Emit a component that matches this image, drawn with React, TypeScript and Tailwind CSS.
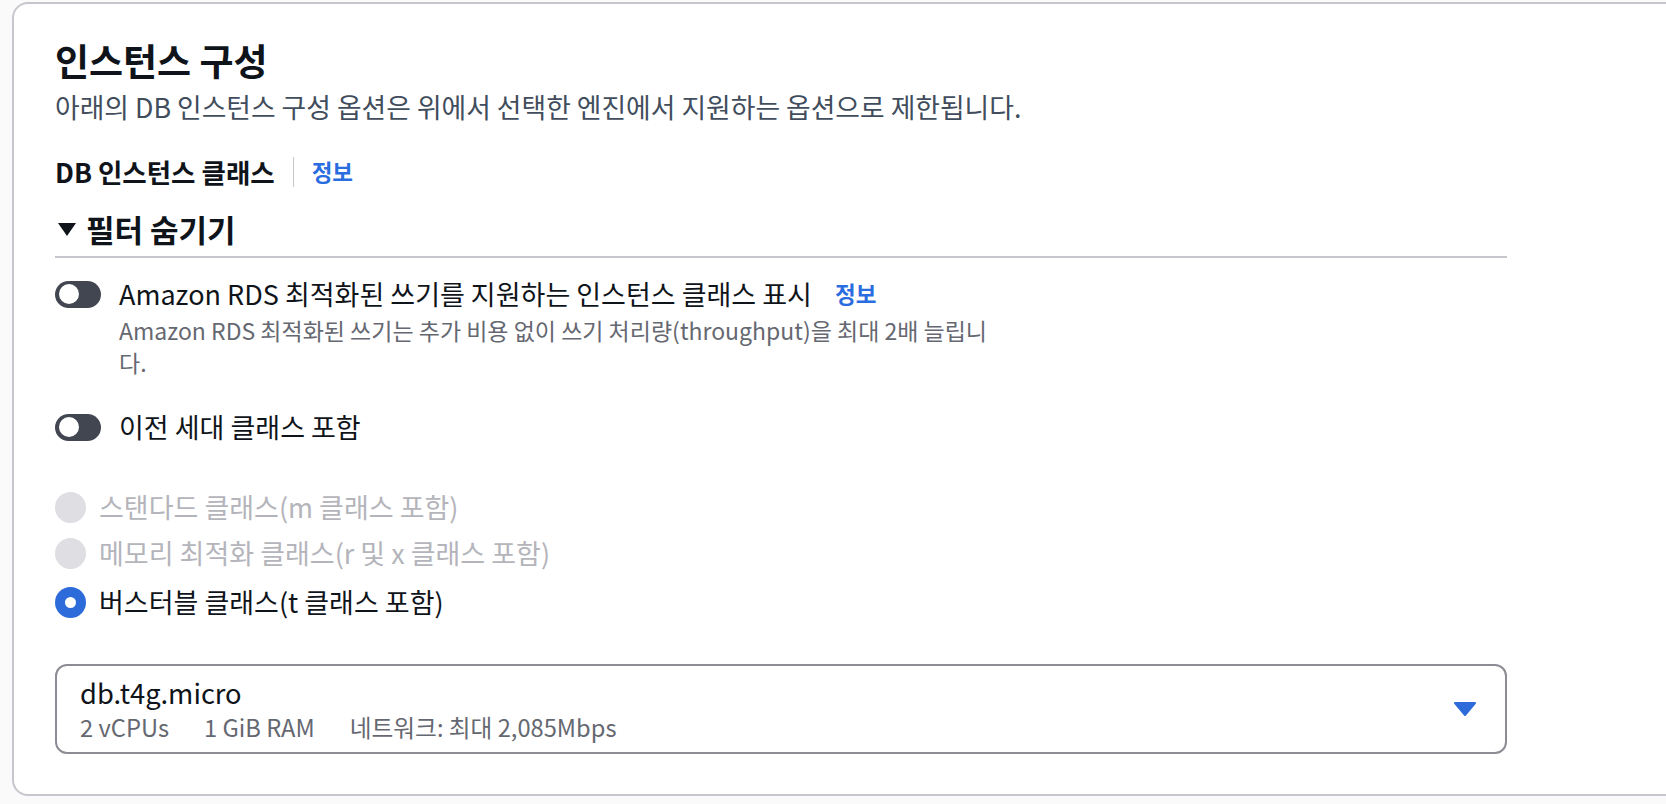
import React from "react";

const FONT = "font-['Noto_Sans_CJK_KR','Noto_Sans',sans-serif]";

function Toggle() {
  return (
    <span className="flex h-[27px] w-[46px] shrink-0 items-center rounded-full bg-[#424650] px-[4px]">
      <span className="h-[20px] w-[20px] rounded-full bg-white" />
    </span>
  );
}

function Radio({ checked, disabled }: { checked?: boolean; disabled?: boolean }) {
  if (checked) {
    return (
      <span className="flex h-[31px] w-[31px] shrink-0 items-center justify-center rounded-full bg-[#2c6bd9]">
        <span className="h-[11px] w-[11px] rounded-full bg-white" />
      </span>
    );
  }
  return (
    <span
      className={`h-[31px] w-[31px] shrink-0 rounded-full ${disabled ? "bg-[#dedee3]" : "border-2 border-[#8c8c94]"}`}
    />
  );
}

export default function App() {
  return (
    <div className={`h-[804px] w-full overflow-hidden bg-[#fafafa] ${FONT}`}>
      <div className="mr-[-40px] ml-[12px] mt-[2px] rounded-[16px] border-2 border-[#c6c6cd] bg-white pl-[41px] pt-[35px] pb-[40px]">
        <h2 className="h-[42px] text-[37px] font-bold leading-[42px] text-[#0f141a]">인스턴스 구성</h2>
        <p className="mt-[10px] h-[32px] text-[26.8px] leading-[32px] text-[#414d5c]">
          아래의 DB 인스턴스 구성 옵션은 위에서 선택한 엔진에서 지원하는 옵션으로 제한됩니다.
        </p>

        <div className="mt-[33px] flex h-[32px] items-center">
          <span className="text-[26.5px] font-bold text-[#0f141a]">DB 인스턴스 클래스</span>
          <span className="mx-[18px] h-[30px] w-px bg-[#c6c6cd]" />
          <span className="text-[22.5px] font-bold text-[#2a6de0]">정보</span>
        </div>

        <div className="mt-[23px] flex h-[36px] items-center gap-[9px]">
          <svg width="20" height="15" viewBox="0 0 20 15" className="ml-[2px] shrink-0">
            <path d="M1 1h18L10 14z" fill="#0f141a" />
          </svg>
          <span className="text-[31px] font-bold text-[#0f141a]">필터 숨기기</span>
        </div>

        <div className="mt-[9px] h-[2px] w-[1452px] bg-[#c6c6cd]" />

        <div className="mt-[21px] flex h-[30px] items-center">
          <Toggle />
          <span className="ml-[18px] text-[27px] text-[#0f141a]">
            Amazon RDS 최적화된 쓰기를 지원하는 인스턴스 클래스 표시
          </span>
          <span className="ml-[23px] text-[22.5px] font-bold text-[#2a6de0]">정보</span>
        </div>
        <p className="ml-[64px] mt-[5px] w-[890px] text-[23px] leading-[32px] text-[#656871]">
          Amazon RDS 최적화된 쓰기는 추가 비용 없이 쓰기 처리량(throughput)을 최대 2배 늘립니다.
        </p>

        <div className="mt-[34px] flex h-[30px] items-center">
          <Toggle />
          <span className="ml-[18px] text-[27px] text-[#0f141a]">이전 세대 클래스 포함</span>
        </div>

        <div className="mt-[42px] flex h-[46px] items-center gap-[13px]">
          <Radio disabled />
          <span className="text-[27px] text-[#b4b4bb]">스탠다드 클래스(m 클래스 포함)</span>
        </div>
        <div className="flex h-[46px] items-center gap-[13px]">
          <Radio disabled />
          <span className="text-[27px] text-[#b4b4bb]">메모리 최적화 클래스(r 및 x 클래스 포함)</span>
        </div>
        <div className="mt-[2px] flex h-[48px] items-center gap-[13px]">
          <Radio checked />
          <span className="text-[27px] text-[#0f141a]">버스터블 클래스(t 클래스 포함)</span>
        </div>

        <div className="mt-[38px] flex h-[90px] w-[1452px] items-center justify-between rounded-[12px] border-2 border-[#8c8c94] pl-[23px] pr-[28px]">
          <div className="flex flex-col">
            <span className="h-[32px] text-[27.3px] leading-[32px] text-[#0f141a]">db.t4g.micro</span>
            <span className="mt-[4px] flex h-[30px] gap-[35px] text-[23.7px] leading-[30px] text-[#656871]">
              <span>2 vCPUs</span>
              <span>1 GiB RAM</span>
              <span>네트워크: 최대 2,085Mbps</span>
            </span>
          </div>
          <svg width="24" height="16" viewBox="0 0 24 16" className="shrink-0">
            <path d="M2 2h20l-10 12z" fill="#2c6bd9" stroke="#2c6bd9" strokeWidth="2" strokeLinejoin="round" />
          </svg>
        </div>
      </div>
    </div>
  );
}
